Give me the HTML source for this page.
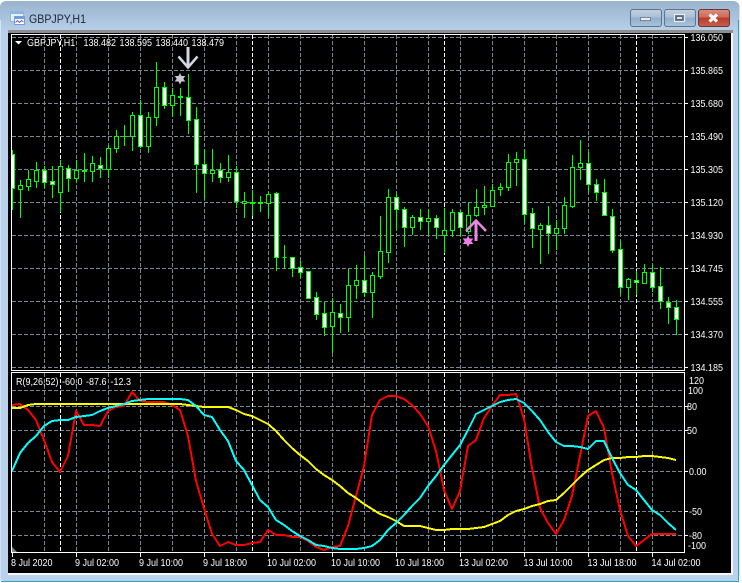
<!DOCTYPE html>
<html><head><meta charset="utf-8"><title>GBPJPY,H1</title>
<style>
html,body{margin:0;padding:0;background:#fff;width:742px;height:583px;overflow:hidden}
svg{display:block}
text{font-family:"Liberation Sans",sans-serif;font-size:10px;fill:#fff;transform-box:fill-box;transform-origin:0% 50%;transform:scaleX(.9)}
text.t{font-size:12px;fill:#1a2636;transform:none}
.c{shape-rendering:crispEdges}
</style></head><body>
<svg width="742" height="583" viewBox="0 0 742 583" xmlns="http://www.w3.org/2000/svg">
<defs>
<linearGradient id="tb" x1="0" y1="0" x2="0" y2="1"><stop offset="0" stop-color="#99b4ce"/><stop offset="0.055" stop-color="#b9d1ea"/><stop offset="1" stop-color="#b9d1ea"/></linearGradient>
<linearGradient id="btn" x1="0" y1="0" x2="0" y2="1"><stop offset="0" stop-color="#c2d1e1"/><stop offset=".45" stop-color="#a9bfd6"/><stop offset=".5" stop-color="#93aeca"/><stop offset="1" stop-color="#a9c3dc"/></linearGradient>
<linearGradient id="cls" x1="0" y1="0" x2="0" y2="1"><stop offset="0" stop-color="#dc8f80"/><stop offset=".45" stop-color="#cc6a58"/><stop offset=".5" stop-color="#b8392a"/><stop offset="1" stop-color="#c9604c"/></linearGradient>
<clipPath id="pl"><rect x="12" y="35" width="672" height="335"/></clipPath>
</defs>
<!-- window frame -->
<rect x="0" y="1" width="739.500" height="581" rx="6" fill="url(#tb)"/>
<rect class="c" x="0" y="20" width="1" height="561" fill="#d5e2ef"/>
<rect class="c" x="738" y="20" width="1" height="561" fill="#2fa3c4"/>
<rect class="c" x="1" y="581" width="738" height="1" fill="#2fa3c4"/>
<rect class="c" x="8" y="30" width="725" height="3" fill="#8d8d8d"/>
<rect class="c" x="8" y="33" width="723" height="540" fill="#000"/>
<rect class="c" x="8" y="573" width="725" height="2" fill="#f4f7fb"/>
<rect class="c" x="731" y="33" width="2" height="542" fill="#f4f7fb"/>
<!-- title icon -->
<rect class="c" x="10" y="11" width="14" height="11" fill="#8db4e2"/>
<rect class="c" x="11" y="14" width="12" height="7" fill="#e6f0fa"/>
<rect class="c" x="14" y="16" width="11" height="9" fill="#6f9fd6"/>
<rect class="c" x="15" y="19" width="9" height="5" fill="#fff"/>
<path d="M15.500 22.500l2-2 2 2 2-2 2 1.500" fill="none" stroke="#7a5fb0" stroke-width="1"/>
<text class="t" x="29" y="23" textLength="57" lengthAdjust="spacingAndGlyphs">GBPJPY,H1</text>
<!-- buttons -->
<rect x="630.500" y="9.500" width="31" height="17" rx="2.500" fill="url(#btn)" stroke="#5f7289"/>
<rect x="640.500" y="17.500" width="10" height="3" fill="#e8ecf1" stroke="#5a6a7e" stroke-width=".7"/>
<rect x="664.500" y="9.500" width="31" height="17" rx="2.500" fill="url(#btn)" stroke="#5f7289"/>
<rect x="674.500" y="14.500" width="10" height="7" fill="#5a6b80" stroke="#e8edf2" stroke-width="1.200"/>
<rect class="c" x="677" y="17" width="5" height="2" fill="#dce4ec"/>
<rect x="698.500" y="9.500" width="31" height="17" rx="2.500" fill="url(#cls)" stroke="#5d3b3b"/>
<path d="M709.500 14.500l7.500 7M717 14.500l-7.500 7" stroke="#fff" stroke-width="3.200" fill="none"/>

<!-- grid -->
<g class="c" fill="none" stroke="#778899" stroke-width="1" stroke-dasharray="4 2">
<path d="M12 37.500H684M12 70.500H684M12 103.500H684M12 136.500H684M12 169.500H684M12 202.500H684M12 235.500H684M12 268.500H684M12 301.500H684M12 334.500H684M12 367.500H684"/>
<path d="M12 390.500H684M12 406.500H684M12 430.500H684M12 471.500H684M12 511.500H684M12 535.500H684"/>
<path d="M44.500 35V370M76.500 35V370M108.500 35V370M140.500 35V370M172.500 35V370M204.500 35V370M236.500 35V370M268.500 35V370M300.500 35V370M332.500 35V370M364.500 35V370M396.500 35V370M428.500 35V370M460.500 35V370M492.500 35V370M524.500 35V370M556.500 35V370M588.500 35V370M620.500 35V370M652.500 35V370"/>
<path d="M44.500 373V552M76.500 373V552M108.500 373V552M140.500 373V552M172.500 373V552M204.500 373V552M236.500 373V552M268.500 373V552M300.500 373V552M332.500 373V552M364.500 373V552M396.500 373V552M428.500 373V552M460.500 373V552M492.500 373V552M524.500 373V552M556.500 373V552M588.500 373V552M620.500 373V552M652.500 373V552"/>
</g>
<g class="c" fill="none" stroke="#fff" stroke-width="1" stroke-dasharray="4 2">
<path d="M60.500 35V370M252.500 35V370M444.500 35V370M636.500 35V370M60.500 373V552M252.500 373V552M444.500 373V552M636.500 373V552"/>
</g>

<!-- candles -->
<g clip-path="url(#pl)">
<path class="c" fill="none" stroke="#00ff00" stroke-width="1" d="M12.500 150V210M20.500 180V218M28.500 170V191M36.500 162V188M44.500 166V188M52.500 166V198M60.500 160V212M68.500 165V192M76.500 160V182M84.500 153V182M92.500 156V182M100.500 157V178M108.500 145V178M116.500 130V153M124.500 125V146M132.500 112V151M140.500 100V148M148.500 112V153M156.500 62V126M164.500 82V109M172.500 88V117M180.500 88V116M188.500 74V134M196.500 107V193M204.500 149V199M212.500 149V182M220.500 163V183M228.500 155V182M236.500 166V208M244.500 192V218M252.500 190V216M260.500 196V212M268.500 192V218M276.500 192V271M284.500 245V269M292.500 257V277M300.500 261V278M308.500 271V299M316.500 292V320M324.500 302V336M332.500 298V353M340.500 304V333M348.500 269V332M356.500 265V299M364.500 255V297M372.500 272V318M380.500 216V279M388.500 189V263M396.500 194V230M404.500 207V247M412.500 215V235M420.500 209V230M428.500 209V235M436.500 215V239M444.500 208V253M452.500 209V237M460.500 210V237M468.500 202V234M476.500 189V217M484.500 186V215M492.500 184V207M500.500 183V196M508.500 154V191M516.500 152V186M524.500 149V223M532.500 208V248M540.500 223V264M548.500 206V254M556.500 220V250M564.500 197V234M572.500 155V208M580.500 140V180M588.500 152V193M596.500 179V201M604.500 179V216M612.500 209V253M620.500 241V294M628.500 278V300M636.500 271V295M644.500 264V284M652.500 265V292M660.500 267V309M668.500 297V324M676.500 300V335"/>
<path class="c" fill="#000" stroke="#00ff00" stroke-width="1" d="M18.500 185.500h4V189.500h-4zM26.500 179.500h4V186.500h-4zM34.500 170.500h4V181.500h-4zM58.500 166.500h4V192.500h-4zM74.500 170.500h4V178.500h-4zM90.500 163.500h4V171.500h-4zM106.500 148.500h4V169.500h-4zM114.500 136.500h4V148.500h-4zM122.500 136.500h4M130.500 115.500h4V136.500h-4zM146.500 117.500h4V146.500h-4zM154.500 87.500h4V117.500h-4zM170.500 95.500h4V105.500h-4zM210.500 170.500h4V173.500h-4zM226.500 172.500h4V177.500h-4zM242.500 201.500h4V203.500h-4zM266.500 194.500h4V203.500h-4zM282.500 257.500h4M330.500 312.500h4V326.500h-4zM346.500 285.500h4V317.500h-4zM354.500 280.500h4V285.500h-4zM370.500 275.500h4V292.500h-4zM378.500 251.500h4V276.500h-4zM386.500 197.500h4V252.500h-4zM410.500 217.500h4V227.500h-4zM426.500 218.500h4V221.500h-4zM442.500 230.500h4V235.500h-4zM450.500 212.500h4V230.500h-4zM466.500 215.500h4V231.500h-4zM474.500 207.500h4V215.500h-4zM482.500 205.500h4V207.500h-4zM490.500 190.500h4V206.500h-4zM498.500 187.500h4V189.500h-4zM506.500 162.500h4V187.500h-4zM514.500 159.500h4V162.500h-4zM538.500 225.500h4V229.500h-4zM554.500 228.500h4V233.500h-4zM562.500 205.500h4V228.500h-4zM570.500 167.500h4V206.500h-4zM578.500 163.500h4V167.500h-4zM626.500 279.500h4V287.500h-4zM642.500 272.500h4V283.500h-4z"/>
<path class="c" fill="#fff" stroke="#00ff00" stroke-width="1" d="M10.500 154.500h4V188.500h-4zM42.500 170.500h4V182.500h-4zM50.500 181.500h4V184.500h-4zM66.500 168.500h4V178.500h-4zM82.500 170.500h4V171.500h-4zM98.500 165.500h4V168.500h-4zM138.500 115.500h4V146.500h-4zM162.500 87.500h4V105.500h-4zM178.500 96.500h4V97.500h-4zM186.500 97.500h4V120.500h-4zM194.500 119.500h4V164.500h-4zM202.500 164.500h4V173.500h-4zM218.500 170.500h4V177.500h-4zM234.500 172.500h4V201.500h-4zM250.500 202.500h4V203.500h-4zM258.500 202.500h4V203.500h-4zM274.500 193.500h4V257.500h-4zM290.500 257.500h4V268.500h-4zM298.500 267.500h4V272.500h-4zM306.500 271.500h4V298.500h-4zM314.500 297.500h4V314.500h-4zM322.500 313.500h4V327.500h-4zM338.500 313.500h4V317.500h-4zM362.500 280.500h4V292.500h-4zM394.500 197.500h4V209.500h-4zM402.500 209.500h4V227.500h-4zM418.500 217.500h4V221.500h-4zM434.500 218.500h4V227.500h-4zM458.500 212.500h4V227.500h-4zM522.500 159.500h4V214.500h-4zM530.500 213.500h4V228.500h-4zM546.500 225.500h4V233.500h-4zM586.500 163.500h4V184.500h-4zM594.500 184.500h4V192.500h-4zM602.500 192.500h4V215.500h-4zM610.500 216.500h4V250.500h-4zM618.500 249.500h4V287.500h-4zM634.500 280.500h4V282.500h-4zM650.500 272.500h4V287.500h-4zM658.500 286.500h4V301.500h-4zM666.500 302.500h4V307.500h-4zM674.500 307.500h4V319.500h-4z"/>
</g>

<!-- arrows and stars -->
<path d="M188 47V66" stroke="#d5d5e6" stroke-width="3" fill="none"/>
<path d="M178.500 56.500L188 67.500L197.500 56.500" stroke="#d5d5e6" stroke-width="2.500" fill="none"/>
<path d="M180 73l1.500 3h3.800l-2 2.700 2 2.800h-3.800l-1.500 3-1.500-3h-3.800l2-2.800-2-2.700h3.800z" fill="#c9c6d6"/>
<path d="M476 222V241" stroke="#ec86e6" stroke-width="3" fill="none"/>
<path d="M466 231L476 220.500L486 231" stroke="#ec86e6" stroke-width="2.500" fill="none"/>
<path d="M468 235.500l1.500 3h3.800l-2 2.700 2 2.800h-3.800l-1.500 3-1.500-3h-3.800l2-2.800-2-2.700h3.800z" fill="#ec7fe6"/>

<!-- indicator lines -->
<g class="c" fill="none" stroke-width="2" stroke-linejoin="round">
<polyline stroke="#ff0000" points="12,405 20,404 28,410 36,420 44,440 52,462 60,472 68,456 76,411 84,425 92,425 100,426 108,411 116,407 124,406 132,392 140,401 148,402 156,402 164,402 172,405 180,410 188,436 196,481 204,508 212,534 220,546 228,542 236,545 244,545 252,543 260,542 268,530 276,535 284,535 292,537 300,537 308,541 316,547 324,550 332,547 340,546 348,526 356,496 364,466 372,415 380,400 388,396 396,396 404,399 412,405 420,414 428,426 436,451 444,490 452,509 460,491 468,446 476,440 484,418 492,406 500,395 508,395 516,394 524,419 532,468 540,508 548,523 556,534 564,520 572,496 580,456 588,416 596,411 604,428 612,473 620,510 628,536 636,546 644,540 652,534 660,534 668,534 676,534"/>
<polyline stroke="#ffff00" points="12,408 20,408 28,405 36,404 44,404 180,404 188,405 196,406 204,407 228,407 236,410 244,414 252,416 260,420 268,424 276,431 284,440 292,448 300,455 308,461 316,469 324,475 332,480 340,486 348,493 356,498 364,504 372,509 380,514 388,517 396,521 404,526 412,526 420,526 428,528 436,530 444,530 452,529 460,529 468,529 476,528 484,527 492,524 500,521 508,515 516,511 524,509 532,506 540,504 548,501 556,500 564,493 572,485 580,477 588,470 596,465 604,460 612,458 620,458 628,457 636,457 644,456 652,456 660,457 668,458 676,460"/>
<polyline stroke="#00ffff" points="12,471 20,453 28,443 36,436 44,426 52,421 60,420 68,420 76,417 84,416 92,415 100,411 108,408 116,406 124,404 132,401 140,400 148,399 156,399 164,399 172,399 180,399 188,400 196,406 204,415 212,417 220,430 228,441 236,461 244,470 252,485 260,500 268,507 276,520 284,525 292,531 300,536 308,540 316,545 324,546 332,548 340,549 348,549 356,549 364,548 372,546 380,540 388,530 396,523 404,515 412,506 420,498 428,486 436,476 444,465 452,455 460,445 468,430 476,414 484,410 492,406 500,402 508,400 516,399 524,403 532,411 540,420 548,432 556,442 564,446 572,446 580,447 588,449 596,441 604,441 612,458 620,473 628,485 636,490 644,500 652,510 660,515 668,523 676,530"/>
</g>

<!-- chart borders -->
<g class="c" fill="#fff">
<rect x="11" y="34" width="674" height="1"/>
<rect x="11" y="370" width="674" height="1"/>
<rect x="11" y="372" width="674" height="1"/>
<rect x="11" y="552" width="674" height="1"/>
<rect x="11" y="34" width="1" height="337"/>
<rect x="11" y="372" width="1" height="181"/>
<rect x="684" y="34" width="1" height="337"/>
<rect x="684" y="372" width="1" height="181"/>
</g>
<path class="c" fill="#fff" d="M685 37h3v1h-3zM685 70h3v1h-3zM685 103h3v1h-3zM685 136h3v1h-3zM685 169h3v1h-3zM685 202h3v1h-3zM685 235h3v1h-3zM685 268h3v1h-3zM685 301h3v1h-3zM685 334h3v1h-3zM685 367h3v1h-3zM685 406h3v1h-3zM685 430h3v1h-3zM685 471h3v1h-3zM685 511h3v1h-3zM685 535h3v1h-3zM12 553h1v4h-1zM76 553h1v4h-1zM140 553h1v4h-1zM204 553h1v4h-1zM268 553h1v4h-1zM332 553h1v4h-1zM396 553h1v4h-1zM460 553h1v4h-1zM524 553h1v4h-1zM588 553h1v4h-1zM652 553h1v4h-1z"/>
<path d="M12 547L17 552H12z" fill="#778899"/>
<path d="M15 41h7l-3.500 3.500z" fill="#fff"/>

<!-- header text -->
<text x="27" y="46">GBPJPY,H1</text>
<text x="83.500" y="46">138.482</text>
<text x="119.500" y="46">138.595</text>
<text x="155.500" y="46">138.440</text>
<text x="191.500" y="46">138.479</text>
<text x="16" y="385">R(9,26,52)</text>
<text x="62" y="385">-60.0</text>
<text x="86" y="385">-87.6</text>
<text x="110.500" y="385">-12.3</text>

<!-- price axis -->
<text x="690.500" y="41">136.050</text>
<text x="690.500" y="74">135.865</text>
<text x="690.500" y="107">135.680</text>
<text x="690.500" y="140">135.490</text>
<text x="690.500" y="173">135.305</text>
<text x="690.500" y="206">135.120</text>
<text x="690.500" y="239">134.930</text>
<text x="690.500" y="272">134.745</text>
<text x="690.500" y="305">134.555</text>
<text x="690.500" y="338">134.370</text>
<text x="690.500" y="371">134.185</text>
<text x="689" y="384">120</text>
<text x="688" y="394">100</text>
<text x="687" y="410">80</text>
<text x="687" y="434">50</text>
<text x="689" y="475">0.00</text>
<text x="689" y="515">-50</text>
<text x="689" y="539">-80</text>
<text x="688" y="549">-100</text>

<!-- time axis -->
<text x="11" y="566">8 Jul 2020</text>
<text x="75" y="566">9 Jul 02:00</text>
<text x="139" y="566">9 Jul 10:00</text>
<text x="203" y="566">9 Jul 18:00</text>
<text x="267" y="566">10 Jul 02:00</text>
<text x="331" y="566">10 Jul 10:00</text>
<text x="395" y="566">10 Jul 18:00</text>
<text x="459" y="566">13 Jul 02:00</text>
<text x="523.500" y="566">13 Jul 10:00</text>
<text x="587.500" y="566">13 Jul 18:00</text>
<text x="651.500" y="566">14 Jul 02:00</text>
</svg>
</body></html>
